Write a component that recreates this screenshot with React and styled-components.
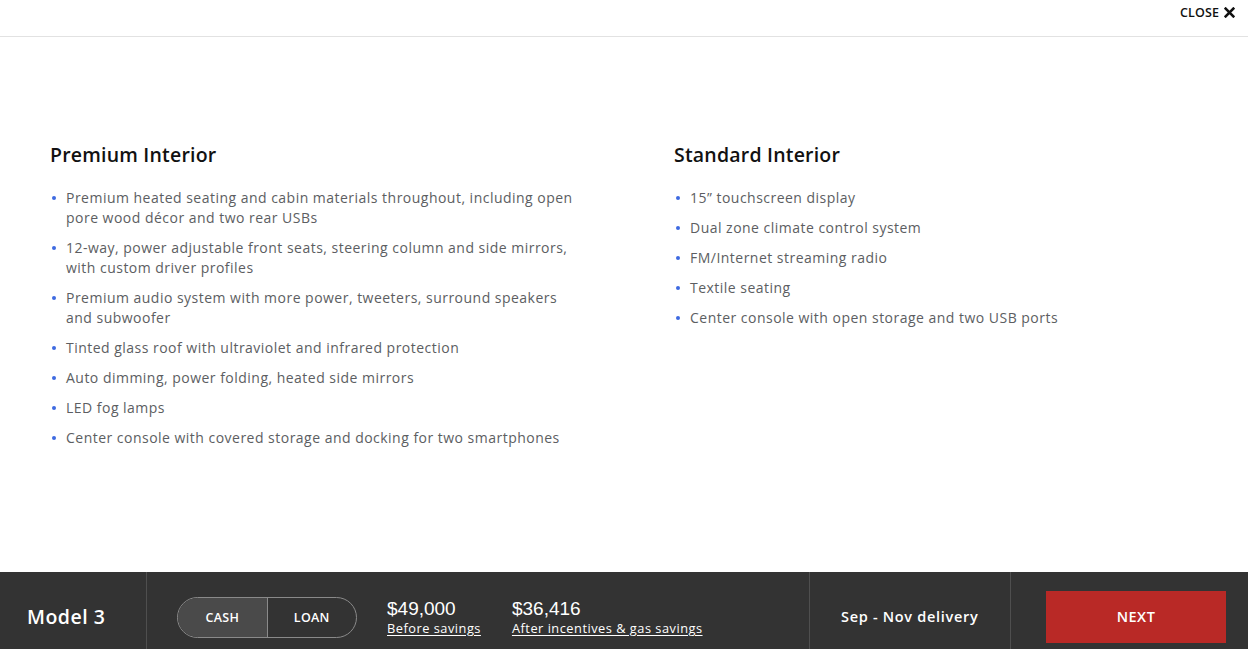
import React from "react";
import styled, { createGlobalStyle } from "styled-components";

const Global = createGlobalStyle`
  * { box-sizing: border-box; }
  html, body { margin: 0; padding: 0; background: #fff; }
  body { font-family: "Open Sans", "Liberation Sans", sans-serif; color: #171a20; }
`;

const Page = styled.div`
  width: 1248px;
  height: 649px;
  display: flex;
  flex-direction: column;
  overflow: hidden;
`;

const TopBar = styled.div`
  height: 37px;
  flex: none;
  border-bottom: 1px solid #e2e2e2;
  display: flex;
  justify-content: flex-end;
  align-items: flex-start;
  padding: 4px 13px 0 0;
`;

const CloseButton = styled.button`
  border: 0;
  background: none;
  display: flex;
  align-items: center;
  gap: 5px;
  font-family: "Open Sans", sans-serif;
  font-size: 12.5px;
  font-weight: 600;
  color: #111;
  letter-spacing: 0.1px;
  padding: 0;
  cursor: pointer;
`;

const Content = styled.main`
  height: 535px;
  flex: none;
  display: grid;
  grid-template-columns: 624px 624px;
  padding-top: 104px;
`;

const Column = styled.section`
  padding-left: 50px;
`;

const Heading = styled.h2`
  margin: 0 0 19px;
  font-size: 19.5px;
  font-weight: 600;
  letter-spacing: 0.2px;
  line-height: 28px;
  color: #111;
`;

const List = styled.ul`
  margin: 0;
  padding: 0;
  list-style: none;
  width: 534px;
  display: flex;
  flex-direction: column;
  gap: 10px;
`;

const Item = styled.li`
  position: relative;
  padding-left: 16px;
  font-size: 14px;
  letter-spacing: 0.48px;
  line-height: 20px;
  color: #5c5e62;
  &::before {
    content: "";
    position: absolute;
    left: 2px;
    top: 8px;
    width: 4px;
    height: 4px;
    border-radius: 50%;
    background: #3e6ae1;
  }
`;

const Footer = styled.footer`
  height: 90px;
  flex: none;
  background: #333333;
  display: flex;
  align-items: stretch;
  color: #fff;
`;

const Cell = styled.div`
  display: flex;
  align-items: center;
  border-right: ${(p) => (p.$divider ? "1px solid #4f4f4f" : "none")};
  padding: ${(p) => p.$pad || "0"};
  width: ${(p) => p.$w || "auto"};
  flex: ${(p) => (p.$grow ? 1 : "none")};
`;

const ModelName = styled.span`
  font-size: 19.5px;
  font-weight: 600;
  letter-spacing: 0.5px;
  margin-top: -1px;
`;

const Toggle = styled.div`
  display: flex;
  width: 180px;
  height: 41px;
  border: 1px solid #8a8a8a;
  border-radius: 21px;
  overflow: hidden;
`;

const ToggleOption = styled.button`
  flex: 1;
  border: 0;
  border-right: ${(p) => (p.$first ? "1px solid #8a8a8a" : "0")};
  background: ${(p) => (p.$active ? "#4a4a4a" : "transparent")};
  color: #fff;
  font-family: "Open Sans", sans-serif;
  font-size: 12.5px;
  font-weight: 600;
  letter-spacing: 0.3px;
  cursor: pointer;
`;

const Prices = styled.div`
  display: flex;
  gap: 31px;
  margin-left: 30px;
`;

const Price = styled.div`
  display: flex;
  flex-direction: column;
`;

const Amount = styled.span`
  font-family: "Liberation Sans", Arial, sans-serif;
  font-size: 19px;
  line-height: 22px;
`;

const PriceNote = styled.a`
  font-size: 12.8px;
  letter-spacing: 0.5px;
  line-height: 16px;
  color: #fff;
  text-decoration: underline;
  text-underline-offset: 2px;
`;

const Delivery = styled.span`
  font-size: 14.5px;
  font-weight: 600;
  letter-spacing: 0.7px;
  margin-top: -1px;
`;

const NextButton = styled.button`
  width: 180px;
  height: 52px;
  background: #b92926;
  border: 0;
  color: #fff;
  font-family: "Open Sans", sans-serif;
  font-size: 14.5px;
  font-weight: 600;
  letter-spacing: 0.5px;
  padding-bottom: 2px;
  cursor: pointer;
`;

const premium = [
  "Premium heated seating and cabin materials throughout, including open pore wood décor and two rear USBs",
  "12-way, power adjustable front seats, steering column and side mirrors, with custom driver profiles",
  "Premium audio system with more power, tweeters, surround speakers and subwoofer",
  "Tinted glass roof with ultraviolet and infrared protection",
  "Auto dimming, power folding, heated side mirrors",
  "LED fog lamps",
  "Center console with covered storage and docking for two smartphones",
];

const standard = [
  "15” touchscreen display",
  "Dual zone climate control system",
  "FM/Internet streaming radio",
  "Textile seating",
  "Center console with open storage and two USB ports",
];

export default function App() {
  return (
    <Page>
      <Global />
      <TopBar>
        <CloseButton>
          CLOSE
          <svg width="11" height="11" viewBox="0 0 10 10">
            <path d="M1.5 1.5 L8.5 8.5 M8.5 1.5 L1.5 8.5" stroke="#111" strokeWidth="2.4" strokeLinecap="square" />
          </svg>
        </CloseButton>
      </TopBar>
      <Content>
        <Column>
          <Heading>Premium Interior</Heading>
          <List>
            {premium.map((t) => (
              <Item key={t}>{t}</Item>
            ))}
          </List>
        </Column>
        <Column>
          <Heading>Standard Interior</Heading>
          <List>
            {standard.map((t) => (
              <Item key={t}>{t}</Item>
            ))}
          </List>
        </Column>
      </Content>
      <Footer>
        <Cell $divider $w="147px" $pad="0 0 0 27px">
          <ModelName>Model 3</ModelName>
        </Cell>
        <Cell $grow $divider $pad="0 0 0 30px">
          <Toggle>
            <ToggleOption $active $first>CASH</ToggleOption>
            <ToggleOption>LOAN</ToggleOption>
          </Toggle>
          <Prices>
            <Price>
              <Amount>$49,000</Amount>
              <PriceNote>Before savings</PriceNote>
            </Price>
            <Price>
              <Amount>$36,416</Amount>
              <PriceNote>After incentives &amp; gas savings</PriceNote>
            </Price>
          </Prices>
        </Cell>
        <Cell $divider $w="201px" $pad="0 0 0 31px">
          <Delivery>Sep - Nov delivery</Delivery>
        </Cell>
        <Cell $w="237px" $pad="0 0 0 35px">
          <NextButton>NEXT</NextButton>
        </Cell>
      </Footer>
    </Page>
  );
}
